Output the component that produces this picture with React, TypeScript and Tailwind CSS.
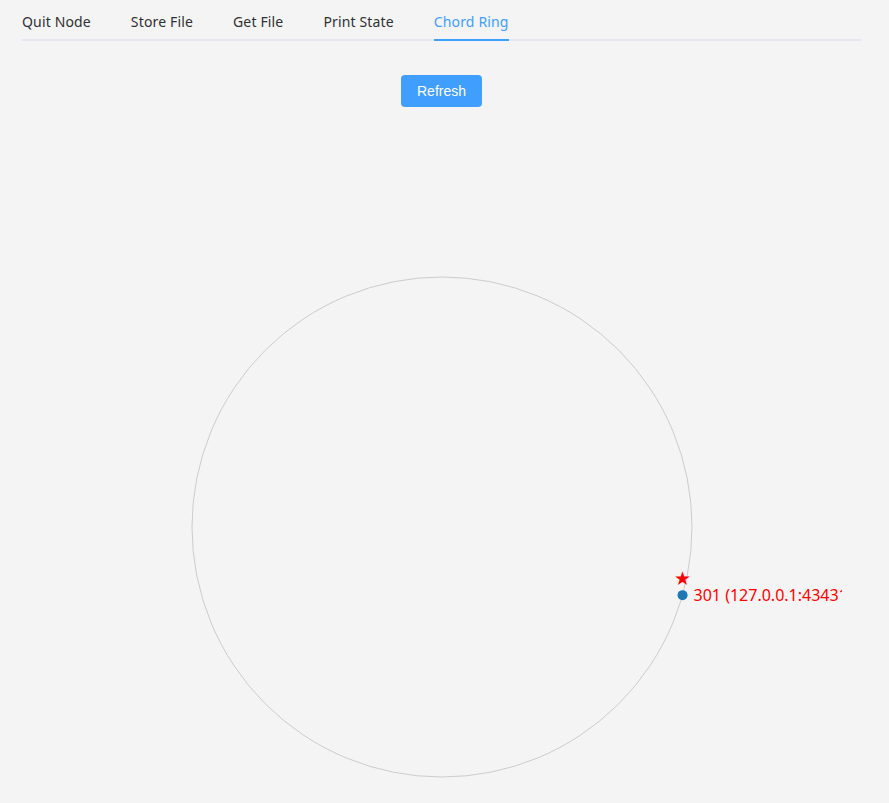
import React from "react";

const tabs = ["Quit Node", "Store File", "Get File", "Print State", "Chord Ring"];

export default function App() {
  const active = "Chord Ring";
  const cx = 400;
  const cy = 400;
  const r = 250;
  // node position on the ring
  const angle = Math.atan2(68, 240);
  const nx = cx + r * Math.cos(angle);
  const ny = cy + r * Math.sin(angle);

  return (
    <div className="min-h-[803px] bg-[#f4f4f4] pl-[22px] pr-[28px] pt-px font-['Noto_Sans','Liberation_Sans',sans-serif]">
      {/* Tabs */}
      <div className="flex border-b-2 border-[#e4e7ed]">
        {tabs.map((t, i) => (
          <div
            key={t}
            className={`${i === 0 ? "pl-0" : "pl-5"} ${i === tabs.length - 1 ? "pr-0" : "pr-5"} -mb-[2px]`}
          >
            <div
              className={`h-[40px] pt-px leading-[40px] text-[14px] tracking-[0.15px] border-b-2 ${
                t === active
                  ? "text-[#409eff] border-[#409eff]"
                  : "text-[#303133] border-transparent"
              }`}
            >
              {t}
            </div>
          </div>
        ))}
      </div>

      <div className="flex flex-col items-center">
        <button
          type="button"
          className="mt-[34px] h-[32px] w-[81px] rounded-[4px] bg-[#409eff] text-white text-[14px] font-['Liberation_Sans',Arial,sans-serif]"
        >
          Refresh
        </button>

        <svg width={800} height={800} className="mt-[20px] block">
          <circle cx={cx} cy={cy} r={r} fill="none" stroke="#cccccc" strokeWidth={1} />
          <circle cx={nx} cy={ny} r={5} fill="#1f77b4" />
          <text
            x={nx}
            y={ny - 10}
            textAnchor="middle"
            fill="red"
            fontSize={19}
            fontFamily="'DejaVu Sans', sans-serif"
          >
            ★
          </text>
          <text
            x={nx + 11}
            y={ny + 6}
            fill="red"
            fontSize={16}
            fontFamily="'Noto Sans', 'Liberation Sans', sans-serif"
          >
            301 (127.0.0.1:43431)
          </text>
        </svg>
      </div>
    </div>
  );
}
